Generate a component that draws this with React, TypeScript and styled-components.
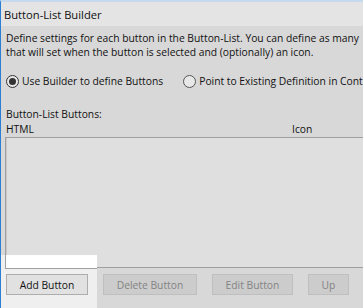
import React from "react";
import styled, { createGlobalStyle } from "styled-components";

const Global = createGlobalStyle`
  html, body { margin: 0; padding: 0; background: #d8d8d8; }
  body { font-family: "Open Sans", "Noto Sans", sans-serif; }
`;

const Window = styled.div`
  position: relative;
  width: 363px;
  height: 308px;
  overflow: hidden;
  box-sizing: border-box;
  border-left: 1px solid #2b7ed6;
  border-top: 2px solid #c7d9ee;
  background: #d8d8d8;
  display: flex;
  flex-direction: column;
  font-size: 10.3px;
  color: #111111;
  & > * { flex-shrink: 0; }
`;

const TitleBar = styled.div`
  height: 24px;
  background: #e4e4e4;
  display: flex;
  align-items: center;
  padding-left: 3px;
  font-size: 11.2px;
  white-space: nowrap;
`;

const Body = styled.div`
  display: flex;
  flex-direction: column;
  padding: 5px 0 0 5px;
  white-space: nowrap;
  & > * { flex-shrink: 0; }
`;

const Description = styled.div`
  line-height: 14px;
`;

const RadioRow = styled.div`
  display: flex;
  align-items: center;
  margin-top: 14px;
  height: 16px;
`;

const RadioOption = styled.label<{ $gap?: number }>`
  display: flex;
  align-items: center;
  gap: 3px;
  margin-right: ${(p) => p.$gap ?? 0}px;
`;

const RadioCircle = styled.span<{ $checked?: boolean }>`
  width: 11px;
  height: 11px;
  border-radius: 50%;
  border: 1px solid ${(p) => (p.$checked ? "#333333" : "#555555")};
  background: #e8e8e8;
  display: flex;
  align-items: center;
  justify-content: center;
  &::after {
    content: "";
    width: 7px;
    height: 7px;
    border-radius: 50%;
    background: ${(p) => (p.$checked ? "#333333" : "transparent")};
  }
`;

const SectionLabel = styled.div`
  margin-top: 18px;
  line-height: 15px;
`;

const ColumnHeaders = styled.div`
  display: flex;
  line-height: 15px;
`;

const HtmlHeader = styled.span`
  width: 286px;
`;

const ListBox = styled.div`
  box-sizing: border-box;
  height: 131px;
  margin-left: -1px;
  margin-right: -20px;
  border: 1px solid #a0a0a0;
  border-right: none;
  background: #dfdfdf;
  box-shadow: inset 1px 0 0 #c8c8c8;
`;

const ButtonBar = styled.div`
  position: relative;
  display: flex;
  align-items: center;
  gap: 15px;
  margin-top: 6px;
  padding-left: 5px;
`;

const ActionButton = styled.button<{ $w: number }>`
  width: ${(p) => p.$w}px;
  height: 21px;
  box-sizing: border-box;
  font-family: inherit;
  font-size: 10.3px;
  padding: 0;
  border: 1px solid ${(p) => (p.disabled ? "#bfbfbf" : "#adadad")};
  background: ${(p) => (p.disabled ? "#cccccc" : "#e1e1e1")};
  color: ${(p) => (p.disabled ? "#838383" : "#111111")};
`;

const Glare = styled.div`
  position: absolute;
  left: 0;
  top: 253px;
  width: 96px;
  height: 55px;
  background: #efefef;
  &::before {
    content: "";
    position: absolute;
    left: 4px;
    top: 0;
    right: 0;
    height: 13px;
    background: #ffffff;
    border-left: 1px solid #a0a0a0;
    border-bottom: 1px solid #a0a0a0;
  }
`;

export default function App() {
  return (
    <>
      <Global />
      <Window>
        <TitleBar>Button-List Builder</TitleBar>
        <Body>
          <Description>
            Define settings for each button in the Button-List. You can define as many
            <br />
            that will set when the button is selected and (optionally) an icon.
          </Description>
          <RadioRow>
            <RadioOption $gap={20}>
              <RadioCircle $checked />
              Use Builder to define Buttons
            </RadioOption>
            <RadioOption>
              <RadioCircle />
              Point to Existing Definition in Control
            </RadioOption>
          </RadioRow>
          <SectionLabel>Button-List Buttons:</SectionLabel>
          <ColumnHeaders>
            <HtmlHeader>HTML</HtmlHeader>
            <span>Icon</span>
          </ColumnHeaders>
          <ListBox />
        </Body>
        <Glare />
        <ButtonBar>
          <ActionButton $w={82}>Add Button</ActionButton>
          <ActionButton $w={94} disabled>Delete Button</ActionButton>
          <ActionButton $w={81} disabled>Edit Button</ActionButton>
          <ActionButton $w={41} disabled>Up</ActionButton>
        </ButtonBar>
      </Window>
    </>
  );
}
